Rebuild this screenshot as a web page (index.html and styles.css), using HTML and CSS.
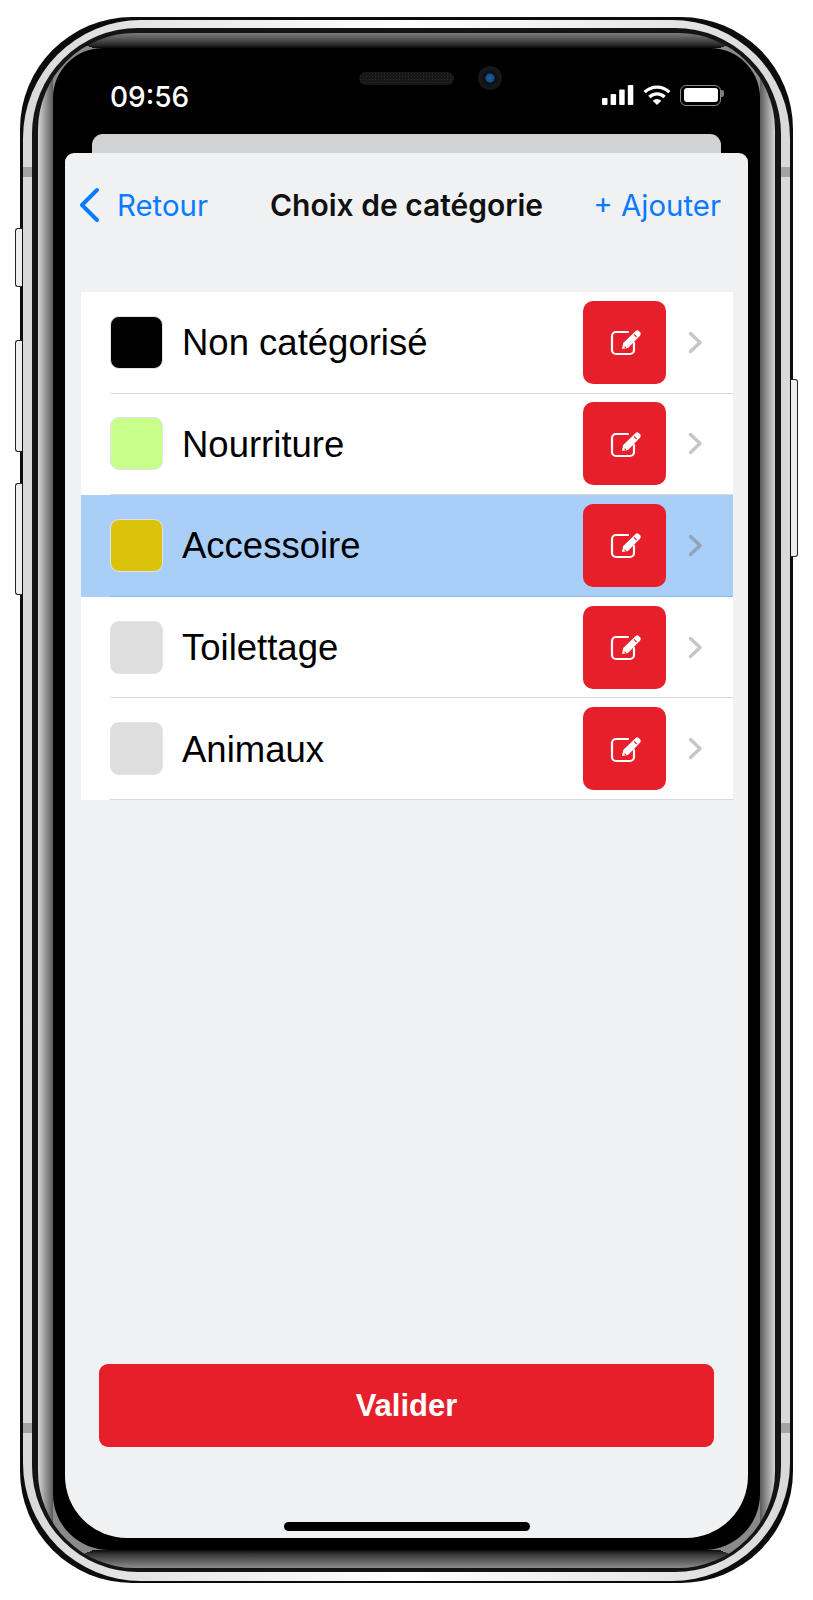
FILE: index.html
```html
<!DOCTYPE html>
<html lang="fr">
<head>
    <meta charset="UTF-8">
    <meta name="viewport" content="width=device-width, initial-scale=1.0">
    <title>Choix de catégorie</title>
    <link rel="stylesheet" href="styles.css">
</head>
<body>
    <svg class="defs" width="0" height="0">
        <symbol id="edit" viewBox="0 0 34 28">
            <path d="M20 4H8a4 4 0 0 0-4 4v14a4 4 0 0 0 4 4h14a4 4 0 0 0 4-4v-7" fill="none" stroke="#fff" stroke-width="2.2" stroke-linecap="round"/>
            <path d="M14 21l1.2-6L27.4 3.2a2.6 2.6 0 0 1 3.6 0l1 1a2.6 2.6 0 0 1 0 3.6L20 20z" fill="#fff"/>
            <path d="M16.6 18.6l1.2 1.2M26 6.4l2.6 2.6" stroke="#e61f2a" stroke-width="1.1"/>
        </symbol>
        <symbol id="chevron" viewBox="0 0 15 23">
            <path d="M2.5 2.5l9.5 9-9.5 9" fill="none" stroke="currentColor" stroke-width="3.4" stroke-linecap="round" stroke-linejoin="round"/>
        </symbol>
    </svg>

    <div class="phone">
        <span class="side-btn mute"></span>
        <span class="side-btn vol-up"></span>
        <span class="side-btn vol-down"></span>
        <span class="side-btn power"></span>

        <div class="rim">
            <span class="band band-tl"></span>
            <span class="band band-tr"></span>
            <span class="band band-bl"></span>
            <span class="band band-br"></span>
            <div class="rim-dark">
                <div class="glass">
                    <div class="bezel">
                        <div class="status">
                            <span class="time">09:56</span>
                            <div class="notch">
                                <span class="speaker"></span>
                                <span class="camera"></span>
                            </div>
                            <div class="status-icons">
                                <svg width="32" height="20" viewBox="0 0 32 20" fill="#fff">
                                    <rect x="0" y="13" width="5.5" height="7" rx="1"/>
                                    <rect x="8.6" y="9" width="5.5" height="11" rx="1"/>
                                    <rect x="17.2" y="4.5" width="5.5" height="15.5" rx="1"/>
                                    <rect x="25.8" y="0" width="5.5" height="20" rx="1"/>
                                </svg>
                                <svg width="28" height="20" viewBox="0 0 28 20" fill="none" stroke="#fff" stroke-width="3.2">
                                    <path d="M1.6 7.2a17.6 17.6 0 0 1 24.8 0"/>
                                    <path d="M6.4 12a10.8 10.8 0 0 1 15.2 0"/>
                                    <path d="M14 20l-4.3-4.3a6.1 6.1 0 0 1 8.6 0z" fill="#fff" stroke="none"/>
                                </svg>
                                <div class="battery"><span class="battery-level"></span></div>
                            </div>
                        </div>
                        <div class="card-back"></div>

                        <div class="screen">
                            <div class="nav">
                                <a class="nav-back">
                                    <svg width="22" height="36" viewBox="0 0 22 36">
                                        <path d="M19 3L4 18l15 15" fill="none" stroke="#0a7aff" stroke-width="4" stroke-linecap="round" stroke-linejoin="round"/>
                                    </svg>
                                    Retour
                                </a>
                                <div class="nav-title">Choix de catégorie</div>
                                <a class="nav-add">+ Ajouter</a>
                            </div>

                            <ul class="list">
                                <li class="row">
                                    <span class="swatch swatch-black"></span>
                                    <div class="row-body">
                                        <span class="row-label">Non catégorisé</span>
                                        <button class="edit-btn"><svg width="34" height="28"><use href="#edit"/></svg></button>
                                        <svg class="chevron" width="15" height="23"><use href="#chevron"/></svg>
                                    </div>
                                </li>
                                <li class="row">
                                    <span class="swatch swatch-green"></span>
                                    <div class="row-body">
                                        <span class="row-label">Nourriture</span>
                                        <button class="edit-btn"><svg width="34" height="28"><use href="#edit"/></svg></button>
                                        <svg class="chevron" width="15" height="23"><use href="#chevron"/></svg>
                                    </div>
                                </li>
                                <li class="row selected">
                                    <span class="swatch swatch-yellow"></span>
                                    <div class="row-body">
                                        <span class="row-label">Accessoire</span>
                                        <button class="edit-btn"><svg width="34" height="28"><use href="#edit"/></svg></button>
                                        <svg class="chevron" width="15" height="23"><use href="#chevron"/></svg>
                                    </div>
                                </li>
                                <li class="row">
                                    <span class="swatch swatch-grey"></span>
                                    <div class="row-body">
                                        <span class="row-label">Toilettage</span>
                                        <button class="edit-btn"><svg width="34" height="28"><use href="#edit"/></svg></button>
                                        <svg class="chevron" width="15" height="23"><use href="#chevron"/></svg>
                                    </div>
                                </li>
                                <li class="row">
                                    <span class="swatch swatch-grey"></span>
                                    <div class="row-body">
                                        <span class="row-label">Animaux</span>
                                        <button class="edit-btn"><svg width="34" height="28"><use href="#edit"/></svg></button>
                                        <svg class="chevron" width="15" height="23"><use href="#chevron"/></svg>
                                    </div>
                                </li>
                            </ul>

                            <button class="submit">Valider</button>
                            <div class="home-bar"></div>
                        </div>
                    </div>
                </div>
            </div>
        </div>
    </div>
</body>
</html>
```

FILE: styles.css
```css
* {
    box-sizing: border-box;
}
body {
    margin: 0;
    padding: 17px 20px;
    background: #fff;
    font-family: 'Liberation Sans', Arial, sans-serif;
}
.defs {
    position: absolute;
}

/* Phone frame: nested rings from the outside in */
.phone {
    position: relative;
    width: 773px;
    height: 1566px;
    padding: 3px 3px 2px;
    border-radius: 112px;
    background: #0c0c0c;
}
.rim {
    position: relative;
    height: 100%;
    padding: 8px 9px 9px;
    border-radius: 118px;
    background: linear-gradient(90deg, #d8dada, #fff 50%, #d8dada) 0 0 / 100% 100%, #fff;
}
.rim-dark {
    position: relative;
    height: 100%;
    padding: 5px 6px 4px;
    border-radius: 106px;
    background: #141414;
}
.glass {
    height: 100%;
    padding: 15px 15px 18px;
    border-radius: 97px;
    background:
        linear-gradient(to top right, #8a8a8a 50%, transparent 50%) 15px 0 / 40px 15px no-repeat,
        linear-gradient(to top left, #8a8a8a 50%, transparent 50%) calc(100% - 15px) 0 / 40px 15px no-repeat,
        linear-gradient(to bottom right, #8a8a8a 50%, transparent 50%) 15px 100% / 40px 18px no-repeat,
        linear-gradient(to bottom left, #8a8a8a 50%, transparent 50%) calc(100% - 15px) 100% / 40px 18px no-repeat,
        linear-gradient(#7c7c7c, #2a2a2a 12px, #080808 15px, transparent 15px),
        linear-gradient(0deg, #8c8c8c, #333 14px, #0a0a0a 18px, transparent 18px),
        linear-gradient(90deg, #d6d6d6, #5a5a5a 15px, transparent 15px, transparent calc(100% - 15px), #5a5a5a calc(100% - 15px), #d6d6d6),
        #8a8a8a;
}
.bezel {
    height: 100%;
    padding: 0 12px 12px;
    border-radius: 50px 50px 56px 56px;
    background: #000;
}
.side-btn {
    position: absolute;
    width: 7px;
    border: 1.5px solid #222;
    border-right: 0;
    border-radius: 3px 0 0 3px;
    background: #eee;
}
.mute {
    left: -5px;
    top: 211px;
    height: 59px;
}
.vol-up {
    left: -5px;
    top: 323px;
    height: 112px;
}
.vol-down {
    left: -5px;
    top: 466px;
    height: 112px;
}
.power {
    right: -5px;
    top: 362px;
    height: 178px;
    border: 1.5px solid #222;
    border-left: 0;
    border-radius: 0 3px 3px 0;
}
.band {
    position: absolute;
    width: 9px;
    height: 10px;
    background: #a0a4a5;
}
.band-tl {
    left: 0;
    top: 147px;
}
.band-tr {
    right: 0;
    top: 147px;
}
.band-bl {
    left: 0;
    top: 1403px;
}
.band-br {
    right: 0;
    top: 1403px;
}

/* Status bar */
.status {
    display: flex;
    height: 86px;
    padding: 33px 27px 0 45px;
    color: #fff;
}
.time {
    flex: none;
    width: 80px;
    font-family: Inter, sans-serif;
    font-size: 28px;
    font-weight: 500;
    line-height: 32px;
}
.notch {
    display: flex;
    align-items: center;
    gap: 24px;
    height: 36px;
    margin: -21px 0 0 169px;
}
.speaker {
    width: 95px;
    height: 13px;
    border-radius: 7px;
    background: #171717 radial-gradient(#2b2b2b 35%, transparent 40%) 0 0 / 3px 3px;
}
.camera {
    width: 24px;
    height: 24px;
    border-radius: 50%;
    background: radial-gradient(#1d62a8 0, #144a80 25%, #0a0f16 29%, #16181b 55%, #141518 100%);
}
.status-icons {
    display: flex;
    align-items: center;
    gap: 9px;
    height: 24px;
    margin: 2px -4px 0 auto;
}
.battery {
    position: relative;
    width: 41px;
    height: 21px;
    margin-right: 4px;
    padding: 2.5px;
    border: 1.5px solid #8a8a8a;
    border-radius: 6px;
}
.battery::after {
    content: "";
    position: absolute;
    left: 40px;
    top: 4.5px;
    width: 3px;
    height: 7px;
    border-radius: 0 2px 2px 0;
    background: #7a7a7a;
}
.battery-level {
    display: block;
    height: 100%;
    border-radius: 3px;
    background: #fff;
}
.card-back {
    height: 19px;
    margin: 0 27px;
    border-radius: 11px 11px 0 0;
    background: #d1d2d4;
}

/* App screen */
.screen {
    display: flex;
    flex-direction: column;
    height: 1385px;
    border-radius: 9px 9px 62px 62px;
    background: #f0f1f3;
}
.nav {
    display: grid;
    grid-template-columns: 1fr auto 1fr;
    align-items: center;
    height: 139px;
    padding: 0 27px 35px;
    font-family: Inter, sans-serif;
    font-size: 29.4px;
    color: #0a7aff;
}
.nav-back {
    display: flex;
    align-items: center;
    gap: 17px;
    margin-left: -14px;
}
.nav-title {
    font-size: 30px;
    font-weight: 600;
    color: #111;
}
.nav-add {
    text-align: right;
}

.list {
    margin: 0 15px 0 16px;
    padding: 0;
    list-style: none;
    background: #fff;
}
.row {
    display: flex;
    align-items: center;
    height: 101.6px;
    padding-left: 29px;
    color: #c6c6c9;
}
.row.selected {
    background: #a9cff8;
    color: #8fa3ba;
}
.row-body {
    display: flex;
    flex: 1;
    align-items: center;
    height: 100%;
    margin-left: -53px;
    padding-left: 72px;
    border-bottom: 1px solid #d8d9dc;
}
.row.selected .row-body {
    border-bottom-color: #8fbcec;
}
.swatch {
    position: relative;
    flex: none;
    width: 53px;
    height: 53px;
    margin-top: -1px;
    border: 1.5px solid #e0e3e9;
    border-radius: 9px;
}
.swatch-black {
    background: #000;
}
.swatch-green {
    background: #c8ff8a;
}
.swatch-yellow {
    background: #dcc30b;
}
.swatch-grey {
    background: #dedede;
}
.row-label {
    flex: 1;
    padding-top: 2px;
    font-size: 36.5px;
    color: #000;
}
.edit-btn {
    display: flex;
    align-items: center;
    justify-content: center;
    width: 83px;
    height: 83px;
    padding: 0;
    border: 0;
    border-radius: 10px;
    background: #e61f2a;
}
.chevron {
    margin: 0 30px 0 22px;
}

.submit {
    height: 83px;
    margin: auto 34px 0;
    border: 0;
    border-radius: 9px;
    background: #e61f2a;
    font-family: inherit;
    font-size: 31px;
    font-weight: bold;
    color: #fff;
}
.home-bar {
    width: 246px;
    height: 9px;
    margin: 75px auto 7px;
    border-radius: 5px;
    background: #000;
}
```
